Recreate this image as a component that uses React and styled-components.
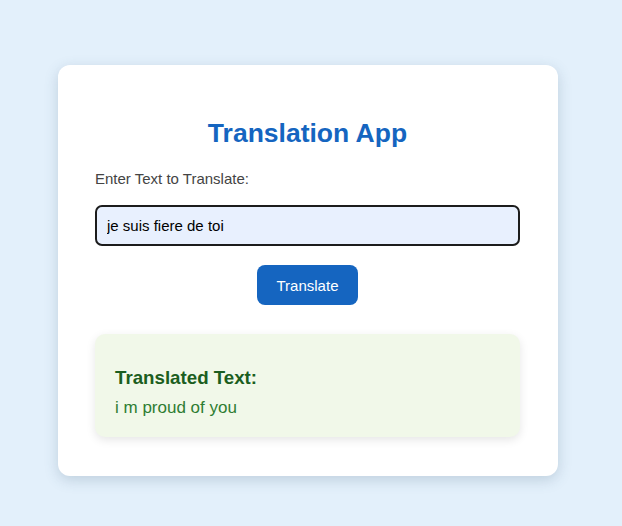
import React from 'react';
import styled, {createGlobalStyle} from 'styled-components';

const GlobalStyle = createGlobalStyle`
    html, body {
        margin: 0;
        padding: 0;
        background: #e3f0fb;
        font-family: "Liberation Sans", Arial, sans-serif;
    }
`;

const Page = styled.div`
    display: flex;
    justify-content: center;
    align-items: flex-start;
    padding: 65px 6px 0 0;
    min-height: 526px;
    box-sizing: border-box;
`;

const Card = styled.div`
    width: 500px;
    box-sizing: border-box;
    background: #fff;
    border-radius: 12px;
    padding: 32px 38px 39px 37px;
    box-shadow: 0 4px 14px rgba(60, 90, 120, 0.22);
    display: flex;
    flex-direction: column;
`;

const Title = styled.h2`
    margin: 21px 0 21px;
    text-align: center;
    font-size: 26.5px;
    font-weight: 700;
    color: #1565c0;
`;

const Label = styled.label`
    display: block;
    font-size: 15px;
    line-height: 18px;
    color: #444;
    margin-bottom: 17px;
`;

const Input = styled.input`
    box-sizing: border-box;
    width: 100%;
    height: 41px;
    padding: 0 10px;
    font-family: inherit;
    font-size: 15px;
    color: #000;
    background: #e8f0fe;
    border: 2px solid #1c1c1c;
    border-radius: 7px;
    outline: none;
`;

const BtnDefault = styled.button`
    align-self: center;
    margin: 19px 0 29px;
    width: 101px;
    height: 40px;
    border: none;
    border-radius: 8px;
    background: #1565c0;
    color: #fff;
    font-family: inherit;
    font-size: 15px;
    cursor: pointer;
`;

const Result = styled.div`
    background: #f1f8e9;
    border-radius: 10px;
    padding: 12px 20px 19px;
    box-shadow: 0 3px 10px rgba(0, 0, 0, 0.1);
`;

const ResultTitle = styled.h3`
    margin: 21px 0 9px;
    font-size: 18.72px;
    font-weight: 700;
    color: #1b5e20;
`;

const ResultText = styled.p`
    margin: 0;
    font-size: 17px;
    color: #2e7d32;
`;

export default function App() {
    return (
        <>
            <GlobalStyle/>
            <Page>
                <Card>
                    <Title>Translation App</Title>
                    <Label htmlFor="source">Enter Text to Translate:</Label>
                    <Input id="source" defaultValue="je suis fiere de toi" spellCheck={false}/>
                    <BtnDefault>Translate</BtnDefault>
                    <Result>
                        <ResultTitle>Translated Text:</ResultTitle>
                        <ResultText>i m proud of you</ResultText>
                    </Result>
                </Card>
            </Page>
        </>
    );
}
